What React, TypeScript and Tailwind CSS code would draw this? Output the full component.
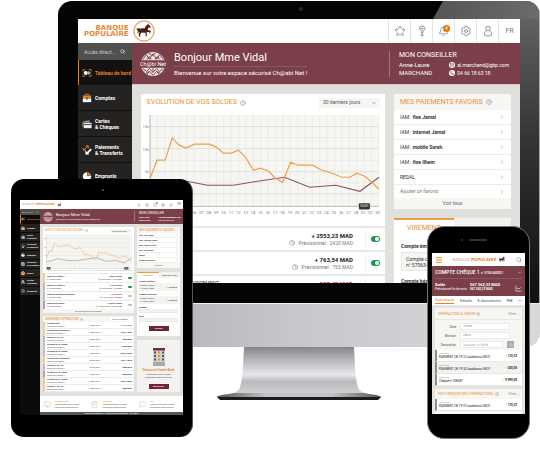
import React from "react";
import {
  Star, Bell, Settings, User, Search, ChevronDown, ChevronRight, CircleHelp, Clock,
  Mail, Phone, Menu, ChartLine, Briefcase, CreditCard, PieChart, LayoutDashboard,
  ArrowLeftRight, Home, Users, FileText, ShoppingBag, Monitor, MessageSquare,
} from "lucide-react";

const orange: [number, number][] = [
  [150, 178], [157, 160], [165, 160], [172, 138], [179, 145], [186, 148], [194, 144], [209, 144],
  [216, 147], [223, 153], [231, 153], [238, 150], [245, 157], [253, 170], [260, 168], [268, 171],
  [275, 178], [282, 182], [290, 162], [297, 165], [312, 165], [319, 169], [334, 174], [341, 177],
  [349, 177], [356, 173], [364, 176], [371, 182], [378, 189],
];
const plum: [number, number][] = [
  [150, 188], [162, 186], [180, 180], [192, 182], [207, 185], [233, 185], [257, 181], [284, 177],
  [309, 187], [335, 185], [359, 191], [378, 177],
];
const days = ["31", "01", "02", "03", "04", "05", "06", "07", "08", "09", "10", "11", "12", "13", "14", "15", "16", "17", "18", "19", "20", "21", "22", "23", "24", "25", "26", "27", "28", "01", "02", "03"];
const toPoints = (p: [number, number][]) => p.map((q) => q.join(",")).join(" ");

function BalanceChart() {
  return (
    <svg viewBox="141 114 243 102" className="block w-full" role="img" aria-label="Evolution de vos soldes">
      <rect x="150" y="115" width="228" height="91" fill="#f6f6f3" />
      {days.map((d, i) => (
        <line key={"v" + i} x1={150 + i * 7.35} x2={150 + i * 7.35} y1="115" y2="206" stroke="#e6e6e2" strokeWidth="0.7" />
      ))}
      {[126, 137, 148, 160, 171, 182, 193].map((y, i) => (
        <line key={y} x1="150" x2="378" y1={y + 0.5} y2={y + 0.5} stroke={i % 2 ? "#e9e9e5" : "#dededa"} strokeWidth="0.9" />
      ))}
      <path d="M150 115v91h228" fill="none" stroke="#a9a9a9" strokeWidth="0.8" />
      <polyline points={toPoints(plum)} fill="none" stroke="#895562" strokeWidth="1.1" />
      <polyline points={toPoints(orange)} fill="none" stroke="#f0a048" strokeWidth="1.2" />
      {["15k", "10k", "5k"].map((t, i) => (
        <text key={t} x="149" y={128 + i * 22.5} fontSize="4" textAnchor="end" fill="#8a8a8a" fontFamily="Roboto">{t}</text>
      ))}
      {days.map((d, i) => (
        <text key={i} x={150 + i * 7.32} y="214" fontSize="4" textAnchor="middle" fill="#777" fontFamily="Roboto">{d}</text>
      ))}
      <rect x="151" y="203" width="10" height="6" rx="1" fill="#333" />
      <text x="156" y="207" fontSize="3" textAnchor="middle" fill="#ddd" fontFamily="Roboto">FEV</text>
      <rect x="358" y="203" width="11" height="6" rx="1" fill="#333" />
      <text x="363.5" y="207" fontSize="3" textAnchor="middle" fill="#ddd" fontFamily="Roboto">MARS</text>
    </svg>
  );
}

function Horse({ ring, className }: { ring?: boolean; className: string }) {
  return (
    <svg viewBox={ring ? "0 0 24 24" : "2 3 20 17"} className={"shrink-0 " + className} aria-hidden="true">
      {ring && <circle cx="12" cy="12" r="11" fill="#fff" stroke="#e9a365" strokeWidth="1.3" />}
      <path
        fill="#4a1f14"
        d="M3.500 10.500c1-1.600 3-1.900 4.600-.9 1.500-.6 3.100-.5 4.500-.4.8-1.800 1.500-3.300 3.100-4.100l.4-1.200.7 1.100c1.300.5 1.900 1.500 2.500 2.700l-.6.9-2-.3c-.2 1.200-.4 2.200-.7 3 1.500 0 2.800.3 3.600 1.200l-1.200 2.200-.8-.2.5-1.400c-1-.2-2-.1-3 .2-.3 1.600.1 2.900.1 4.500l-1.300.2-.3-4.100c-1.600 0-2.900-.2-4.100-.3-.6 1-1.500 1.600-1.900 2.300l.6 2.300-1.200.1-.9-2.600c.4-1.100 1.100-2 1.300-3.200-1 .5-1.300 1.800-2.700 2.300.5-1.200.8-2.400.4-3.600-.5-.5-1-.8-1.600-.7z"
      />
    </svg>
  );
}

function Globe({ className }: { className: string }) {
  return (
    <svg viewBox="0 0 28 28" className={className} aria-hidden="true">
      <defs>
        <clipPath id="globeClip"><circle cx="14" cy="14" r="13" /></clipPath>
      </defs>
      <g clipPath="url(#globeClip)">
        <path d="M0 0h28v10H0zM0 18h28v10H0z" fill="#e9dde0" />
        <path
          d="M3 9l4-5 3 5 4-6 4 6 3-5 4 5M7 9l3-3 2 3M16 9l3-3 2 3M9 2l4 3 4-3M3 19l4 3 3-3 4 4 4-4 3 3 4-3M6 24l4-2 4 4 4-4 4 2M10 22l-3 4M18 22l3 4M14 18v5"
          fill="none" stroke="#7b3f49" strokeWidth="1"
        />
      </g>
      <text x="14" y="16" fontSize="6" textAnchor="middle" fill="#fff" fontFamily="Roboto">Ch@bi Net</text>
    </svg>
  );
}

const menu = [
  { label: "Tableau de bord", Icon: LayoutDashboard },
  { label: "Comptes", Icon: Briefcase },
  { label: "Cartes\n& Chèques", Icon: CreditCard },
  { label: "Paiements\n& Transferts", Icon: ArrowLeftRight },
  { label: "Emprunts", Icon: PieChart },
  { label: "Assurance\n& Prévoyance", Icon: Briefcase },
  { label: "Bourse", Icon: Home },
  { label: "Gestion\n& Contacts", Icon: Users },
  { label: "Documents", Icon: FileText },
];

function MenuGlyph({ index, className }: { index: number; className: string }) {
  const kinds = [
    <g key="a"><path d="M1 2h3M1 2v2M11 2H8M11 2v2M1 10V8M11 10V8M1 10h3M11 10H8" stroke="#e8821e" fill="none" /><circle cx="4.500" cy="6" r="2.500" fill="#fff" /><path d="M8 4v4M9.500 4.500v3" stroke="#fff" fill="none" /></g>,
    <g key="b"><path d="M4 3V1.500h4V3" stroke="#e8821e" fill="none" /><path d="M1 3h10v3H1z" fill="#e8821e" /><path d="M1 6.500h10V11H1z" fill="#fff" /><path d="M5 5.500h2V8H5z" fill="#555" /></g>,
    <g key="c"><path d="M1 3l8-1.500V4H1z" fill="#999" /><path d="M2 4.500h9.500V11H2z" fill="#eee" /><path d="M2 6h9.500v1.300H2z" fill="#555" /><path d="M1 4v5" stroke="#aaa" /></g>,
    <g key="d"><path d="M2 6L7 1.500M4.500 1h3v3M1 3.500L2 6l2.500.5" stroke="#e8821e" strokeWidth="1.200" fill="none" /><path d="M11 5L6 10" stroke="#fff" strokeWidth="2.200" /><path d="M4 6.500V11.500h5z" fill="#fff" /></g>,
    <g key="e"><circle cx="6" cy="6.500" r="5" fill="#fff" /><path d="M6.500 6V1a5 5 0 0 1 4 4z" fill="#e8821e" stroke="#242322" strokeWidth="0.600" /></g>,
  ];
  const { Icon } = menu[index];
  return index < 5
    ? <svg viewBox="0 0 12 12" className={"shrink-0 " + className} aria-hidden="true">{kinds[index]}</svg>
    : <Icon className={"shrink-0 " + className} color={index === 8 ? "#999" : "#fff"} fill={index === 6 ? "#e8821e" : "none"} strokeWidth={3} />;
}

function ToolIcons() {
  const cell = "flex h-full w-[22px] items-center justify-center border-l border-[#e4e4e4] text-[#777]";
  return (
    <nav className="flex h-full" aria-label="Outils">
      <button className={cell} aria-label="Favoris"><Star size={12} strokeWidth={1.5} /></button>
      <button className={cell} aria-label="Aide">
        <svg viewBox="0 0 12 12" className="h-3 w-3" fill="none" stroke="#777" strokeWidth="0.800">
          <path d="M3.500 4.200C3.300 2 4.500 1 6 1s2.800 1 2.800 2.500C8.800 5.200 7 5.300 7 7.800H5.200C5.200 5 7 4.800 7 3.500c0-1-1.800-1-1.800.7z" /><circle cx="6.100" cy="10" r="1" />
        </svg>
      </button>
      <button className={cell + " relative"} aria-label="Alertes">
        <Bell size={11} strokeWidth={1.5} />
        <span className="absolute top-1.5 right-1 flex h-[7px] w-[7px] items-center justify-center rounded-full bg-[#ee7203] text-[5px] leading-none text-white">4</span>
      </button>
      <button className={cell} aria-label="Réglages"><Settings size={12} strokeWidth={1.500} /></button>
      <button className={cell} aria-label="Profil">
        <svg viewBox="0 0 12 12" className="h-3 w-3" fill="none" stroke="#777" strokeWidth="0.800">
          <circle cx="6" cy="3.500" r="2.300" /><path d="M4.500 5.500C2.600 6.500 2.200 8.500 2.300 10c1.500 1.300 5.900 1.300 7.400 0 .1-1.500-.3-3.500-2.200-4.500" />
        </svg>
      </button>
      <button className={cell + " text-[7px] text-[#8b5560]"}>FR</button>
    </nav>
  );
}

function Toggle({ label, small, off }: { label: string; small?: boolean; off?: boolean }) {
  return small ? (
    <input type="checkbox" aria-label={label} defaultChecked={!off}
      className="h-0.5 w-1 appearance-none rounded-[1px] bg-[#bbb] checked:bg-[#1d9650]" />
  ) : (
    <label className="relative flex h-[6px] w-[9px] items-center">
      <input type="checkbox" aria-label={label} defaultChecked={!off} className="peer h-full w-full appearance-none rounded-full bg-[#bbb] checked:bg-[#1d9650]" />
      <span className="absolute right-px h-1 w-1 rounded-full bg-white" />
    </label>
  );
}

const favorites = [["IAM : ", "fixe Jamal"], ["IAM : ", "internet Jamal"], ["IAM : ", "mobile Sarah"], ["IAM : ", "fixe Ilhem"], ["REDAL", ""]];

function DesktopScreen() {
  return (
    <div className="flex h-[264px] flex-col overflow-hidden bg-white font-[Roboto] text-[5px] leading-none">
      <header className="flex h-6 shrink-0 items-center justify-between">
        <a href="#accueil" className="flex items-center gap-1 pl-1.5">
          <span className="text-right font-['DejaVu_Sans',sans-serif] text-[7px] leading-[6px] font-bold text-[#e58a3c]">BANQUE<br />POPULAIRE</span>
          <Horse ring className="h-[22px] w-[22px]" />
        </a>
        <ToolIcons />
      </header>
      <div className="flex min-h-0 flex-1">
        <aside className="w-[54px] shrink-0 bg-[#242322] text-white">
          <div className="flex h-[17px] items-center justify-between bg-[#50504f] pr-[7px] pl-1.5">
            <input aria-label="Accès direct" placeholder="Accès direct..." className="w-[34px] bg-transparent text-[5px] placeholder:text-[#ccc]" />
            <Search size={5} strokeWidth={3} color="#ddd" />
          </div>
          {menu.slice(0, 5).map((m, i) => (
            <a key={m.label} href={"#menu" + i}
              className={"flex items-center gap-[3px] leading-[6px] font-bold whitespace-pre " + (i === 0 ? "h-[25px] border-l border-[#ee7f16] bg-[#121212] pl-[3px] text-[#ee7f16]" : "h-[26px] border-b border-[#111] pl-1")}>
              <MenuGlyph index={i} className="h-[10px] w-[10px]" />
              {m.label}
            </a>
          ))}
        </aside>
        <main className="flex min-w-0 flex-1 flex-col bg-[#e2e0dc]">
          <section className="flex h-[42px] shrink-0 items-center justify-between border-b border-[#d9c8ca] bg-[#7b3f49] pl-2 text-white">
            <div className="flex items-center gap-2">
              <Globe className="h-[26px] w-[26px]" />
              <div>
                <h1 className="border-b border-[#8d5660] pb-px text-[11px] leading-[14px]">Bonjour Mme Vidal</h1>
                <p className="pt-0.5 text-[6px] leading-[8px]">Bienvenue sur votre espace sécurisé Ch@abi Net !</p>
              </div>
            </div>
            <div className="w-[131px] border-l border-[#a2747c] pl-[9px]">
              <h2 className="text-[7px] leading-[9px]">MON CONSEILLER</h2>
              <div className="flex gap-[17px] leading-[8px]">
                <p className="pt-px text-[6px]">Anne-Laure<br />MARCHAND</p>
                <div className="pt-px">
                  <p className="flex items-center gap-0.5"><span className="rounded-full bg-white p-px"><Mail size={4} color="#7b3f49" strokeWidth={3} /></span>al.marchand@gbp.com</p>
                  <p className="flex items-center gap-0.5"><span className="rounded-full bg-white p-px"><Phone size={4} color="#7b3f49" strokeWidth={3} /></span>04 66 18 63 18</p>
                </div>
              </div>
            </div>
          </section>
          <div className="flex gap-[9px] px-[9px] pt-[9px]">
            <section className="min-w-0 flex-1 bg-white">
              <div className="flex h-[17px] items-center justify-between pr-[5px] pl-1.5">
                <h2 className="flex items-center gap-[3px] text-[7px] text-[#e8902f]">EVOLUTION DE VOS SOLDES <CircleHelp size={6} color="#888" /></h2>
                <label className="relative flex items-center">
                  <select aria-label="Période" className="h-[10px] w-[61px] appearance-none bg-[#f6f6f3] pl-1 text-[5px] leading-none text-[#555]"><option>30 derniers jours</option></select>
                  <ChevronDown size={6} color="#777" className="absolute right-[3px]" />
                </label>
              </div>
              <div className="pt-[3px]"><BalanceChart /></div>
              <div className="h-[10px]" />
              {[["+ 2553,23 MAD", "2420 MAD"], ["+ 763,54 MAD", "763 MAD"], ["- 105,45 MAD", "98 MAD"]].map(([a, p], i) => (
                <div key={a} className={"flex h-6 items-center border-t-2 border-[#e8e8e6] pr-[5px] " + (i === 2 ? "justify-between" : "justify-end")}>
                  {i === 2 && <span className="self-start pt-[3px] pl-[37px] leading-[8px] text-[#333]">DÉVELOPPEMENT</span>}
                  <div className="flex items-center">
                    <div className="flex flex-col items-end pr-3">
                      <strong className={"text-[6px] leading-[8px] " + (i === 2 ? "text-[#d8202a]" : "text-[#222]")}>{a}</strong>
                      <span className="flex items-center gap-1 leading-[6px] text-[#777]"><Clock size={6} />Prévisionnel : {p}</span>
                    </div>
                    <div className="flex h-4 items-center border-l border-[#eee] pl-[5px]"><Toggle label={"Afficher le compte " + (i + 1)} /></div>
                  </div>
                </div>
              ))}
            </section>
            <div className="w-[117px] shrink-0">
              <section className="bg-white text-[#333]">
                <h2 className="flex h-4 items-center gap-[3px] bg-[#f7f6f2] pl-1.5 text-[7px] text-[#e8902f]">MES PAIEMENTS FAVORIS <CircleHelp size={6} color="#888" /></h2>
                {favorites.map(([a, b]) => (
                  <a key={b} href="#favori" className="flex h-[15px] items-center justify-between border-b border-[#ecece9] px-1.5">
                    <span>{a}<b>{b}</b></span><ChevronRight size={6} color="#888" />
                  </a>
                ))}
                <a href="#ajouter" className="flex h-[13px] items-center justify-between px-1.5 text-[#777] italic">Ajouter un favoris<ChevronRight size={6} color="#888" /></a>
                <a href="#tous" className="flex h-[11px] items-center justify-center bg-[#f7f6f2] text-[#666]">Voir tous</a>
              </section>
              <section className="mt-[9px] h-[80px] bg-white text-[#333]">
                <div className="flex h-[19px] text-[7px]">
                  <button className="w-[60px] border-t-2 border-[#ee9a45] text-[#e8902f]">VIREMENT</button>
                  <button className="flex-1 bg-[#f3f2ef] text-[6px] text-[#888]">TRANSFERT CASH</button>
                </div>
                <div className="px-[7px] pt-[5px]">
                  <b className="block leading-[8px]">Compte émetteur</b>
                  <p className="my-0.5 h-[19px] border border-[#e6e6e2] bg-[#f6f6f3] px-1 py-[3px] leading-[6px]">Compte chèque<br />n° 57063440001</p>
                  <b className="block pt-1 leading-[8px]">Compte bénéficiaire</b>
                </div>
              </section>
            </div>
          </div>
        </main>
      </div>
    </div>
  );
}

function InlineLogo({ className, mark }: { className: string; mark: string }) {
  return (
    <a href="#accueil" className={"flex items-center gap-0.5 font-['DejaVu_Sans',sans-serif] text-[#e58a3c] " + className}>
      <span><span className="text-[#c9a184]">BANQUE </span><b>POPULAIRE</b></span>
      <Horse className={mark} />
    </a>
  );
}

const accounts = [
  { name: "COMPTE CHÈQUE 1", amount: "+ 2553,23 MAD", note: "Prévisionnel : 2420 MAD", bar: "border-l-[#f5c99a]", off: false },
  { name: "COMPTE CHÈQUE 2", amount: "+ 763,54 MAD", note: "Prévisionnel : 763 MAD", bar: "border-l-[#cdb3bf]", off: false },
  { name: "COMPTE DE DÉVELOPPEMENT", amount: "- 105,45 MAD", note: "Prévisionnel : 98 MAD", bar: "border-l-[#b7bfd6]", off: true },
  { name: "COMPTE ÉPARGNE", amount: "+ 10 095,13 MAD", note: "Prévisionnel : 10 095 MAD", bar: "border-l-[#a9a9a9]", off: true },
];
const operations = [
  ["Virement reçu", "+ 772,22 MAD", "border-l-[#f5c99a]"],
  ["Paiement CB Casablanca", "- 485,41 MAD", "border-l-[#f5c99a]"],
  ["Chèque n° 521457", "- 2000 MAD", "border-l-[#cdb3bf]"],
  ["Virement M. M. Rayani", "- 90,00 MAD", "border-l-[#b7bfd6]"],
  ["Virement M. M. Rayani", "- 300,12 MAD", "border-l-[#b7bfd6]"],
  ["Paiement CB Casablanca", "- 485,41 MAD", "border-l-[#f5c99a]"],
  ["Chèque n° 521457", "- 2000 MAD", "border-l-[#cdb3bf]"],
  ["Virement M. M. Rayani", "- 90,00 MAD", "border-l-[#a9a9a9]"],
  ["Virement M. M. Rayani", "- 300,12 MAD", "border-l-[#f5c99a]"],
  ["Chèque n° 521457", "- 2000 MAD", "border-l-[#f5c99a]"],
];

function TabletScreen() {
  const tool = "flex w-2 justify-center text-[#888]";
  return (
    <div className="flex h-[215px] flex-col overflow-hidden bg-white font-[Roboto] text-[2px] leading-[3px] text-[#444]">
      <header className="flex h-[9px] shrink-0 items-center justify-between pl-0.5">
        <InlineLogo className="text-[3px]" mark="h-1 w-[5px]" />
        <nav className="flex items-center" aria-label="Outils">
          <button className={tool} aria-label="Favoris"><Star size={4} /></button>
          <button className={tool} aria-label="Aide"><CircleHelp size={4} /></button>
          <button className={tool + " relative"} aria-label="Alertes"><Bell size={4} /><span className="absolute -top-px right-px h-0.5 w-0.5 rounded-full bg-[#ee7203]" /></button>
          <button className={tool} aria-label="Réglages"><Settings size={4} /></button>
          <button className={tool} aria-label="Profil"><User size={4} /></button>
          <button className="w-2 text-[3px] text-[#8b5560]">FR</button>
        </nav>
      </header>
      <div className="flex min-h-0 flex-1">
        <aside className="w-5 shrink-0 bg-[#0b0b0b] text-white">
          <div className="flex h-[6px] items-center justify-between bg-[#50504f] px-0.5">
            <input aria-label="Accès direct" placeholder="Accès direct..." className="w-[14px] bg-transparent text-[2px] placeholder:text-[#ccc]" />
            <Search size={2} color="#ccc" />
          </div>
          {menu.map((m, i) => (
            <a key={m.label} href={"#menu" + i} className={"flex h-[9px] items-center gap-0.5 border-b border-b-[#0b0b0b] text-[2px] leading-[3px] font-bold whitespace-pre " + (i === 0 ? "border-l border-l-[#ee7f16] text-[#ee7f16]" : "bg-[#232221] pl-px")}>
              <MenuGlyph index={i} className="h-1 w-1" />{m.label}
            </a>
          ))}
        </aside>
        <main className="flex min-w-0 flex-1 flex-col bg-[#e2e0dc]">
          <section className="flex h-[15px] shrink-0 items-center justify-between bg-[#7b3f49] pl-[3px] text-white">
            <div className="flex items-center gap-[3px]">
              <Globe className="h-[10px] w-[10px]" />
              <div><h1 className="text-[4px] leading-[5px]">Bonjour Mme Vidal</h1><p className="pt-px">Bienvenue sur votre espace sécurisé Ch@abi Net !</p></div>
            </div>
            <div className="w-[49px] border-l border-[#a2747c] pl-1">
              <h2 className="pb-px text-[3px] leading-[4px]">MON CONSEILLER</h2>
              <div className="flex gap-2 font-bold"><p>Anne-Laure<br />MARCHAND</p><p>● al.marchand@gbp.com<br />● 04 66 18 63 18</p></div>
            </div>
          </section>
          <div className="flex flex-1 gap-[3px] p-[3px] pb-0">
            <div className="min-w-0 flex-1">
              <section className="bg-white">
                <div className="flex h-[7px] items-center justify-between px-0.5">
                  <h2 className="flex items-center gap-px text-[3px] text-[#e8902f]">EVOLUTION DE VOS SOLDES <CircleHelp size={3} color="#888" /></h2>
                  <select aria-label="Période" className="h-1 w-[22px] appearance-none bg-[#f3f3f0] pl-0.5 text-[2px] leading-none"><option>30 derniers jours</option></select>
                </div>
                <div className="pb-px"><BalanceChart /></div>
                {accounts.map((a) => (
                  <div key={a.name} className={"flex h-[9px] items-center border-t border-l-2 border-t-[#e8e8e6] pl-0.5 " + a.bar}>
                    <div className="flex-1"><b className="text-[#222]">{a.name}</b><br />n° 57063440001</div>
                    <div className="pr-1.5 text-right"><b className={a.amount.startsWith("-") ? "text-[#e02020]" : "text-[#222]"}>{a.amount}</b><br />◷ {a.note}</div>
                    <div className="mr-0.5 flex h-full items-center"><Toggle small off={a.off} label={a.name} /></div>
                  </div>
                ))}
                <p className="h-1 bg-[#f7f6f2] text-center leading-[4px]">AFFICHER TOUS LES SOLDES</p>
              </section>
              <section className="mt-[3px] bg-white">
                <div className="flex h-[6px] items-center justify-between bg-[#f7f6f2] px-0.5">
                  <h2 className="flex items-center gap-px text-[3px] text-[#e8902f]">DERNIÈRES OPÉRATIONS <CircleHelp size={3} color="#888" /></h2>
                  <select aria-label="Compte" className="h-1 w-[22px] appearance-none bg-white pl-0.5 text-[2px] leading-none"><option>Tous les comptes</option></select>
                </div>
                <table className="w-full border-separate border-spacing-0">
                  <tbody>
                    {operations.map(([n, a, bar], i) => (
                      <tr key={i} className="h-[7px]">
                        <td className={"border-b border-l-2 border-b-[#ececec] p-0 pl-0.5 " + bar}><b className="text-[#222]">{n}</b><br />COMPTE CHÈQUE 1</td>
                        <td className="border-b border-[#ececec] p-0">30/05/2015</td>
                        <td className={"border-b border-[#ececec] p-0 pr-0.5 text-right font-bold " + (i === 0 ? "text-[#1d9650]" : "text-[#222]")}>{a}</td>
                      </tr>
                    ))}
                  </tbody>
                </table>
              </section>
            </div>
            <div className="w-[43px] shrink-0">
              <section className="bg-white">
                <h2 className="flex h-[6px] items-center gap-px bg-[#f7f6f2] pl-0.5 text-[3px] text-[#e8902f]">MES PAIEMENTS FAVORIS</h2>
                {[...favorites, ["Ajouter un favoris", ""]].map(([a, b]) => (
                  <a key={a + b} href="#favori" className="flex h-[5px] items-center justify-between border-b border-[#f0f0ee] px-0.5 text-[#222]"><b>{a}{b}</b><ChevronRight size={2} /></a>
                ))}
                <a href="#tous" className="block h-[5px] bg-[#f7f6f2] text-center leading-[5px]">Voir tous</a>
              </section>
              <section className="mt-1 h-[64px] bg-white">
                <div className="flex h-[6px]">
                  <button className="w-[22px] border-t border-[#ee9a45] font-bold text-[#e8902f]">VIREMENT</button>
                  <button className="flex-1 bg-[#f3f2ef]">TRANSFERT CASH</button>
                </div>
                <div className="flex flex-col px-0.5 pt-0.5">
                  {["Compte émetteur", "Compte bénéficiaire"].map((l) => (
                    <div key={l} className="h-[13px]">
                      <b className="block text-[#222]">{l}</b>
                      <p className="flex h-[8px] items-center justify-between bg-[#f3f3f0] px-px"><span>Compte chèque 1<br />n° 57063440001</span><b>+ 1489 MAD</b></p>
                    </div>
                  ))}
                  {["Montant", "Motif"].map((l) => (
                    <label key={l} className="mb-px flex h-2 flex-col font-bold text-[#222]">{l}<input aria-label={l} className="h-1 w-full border border-[#eaeae6] bg-[#f3f3f0]" /></label>
                  ))}
                  <button className="mx-auto mt-0.5 h-[5px] w-5 bg-[#6f2434] font-bold text-white">VALIDER</button>
                </div>
              </section>
              <section className="mt-1 flex h-[52px] flex-col items-center bg-[#f3f2f0] pt-2 text-center">
                <svg viewBox="0 0 12 18" className="h-[18px] w-3" aria-hidden="true">
                  <path d="M0 0h12v18H0z" fill="#d2d0ce" /><path d="M0 0h12v2.500H0z" fill="#6d3038" /><path d="M0 14h12v4H0z" fill="#aaa" />
                  {[3.5, 7, 10.5].map((y) => [1, 5, 9].map((x) => <rect key={x + "-" + y} x={x} y={y} width="2" height="2" fill={x === 5 ? "#e8902f" : "#555"} />))}
                </svg>
                <b className="pt-[3px] text-[3px] text-[#e8902f]">Découvrez Pocket Bank</b>
                <p className="h-3 px-1 pt-px">Lorem ipsum dolor sit amet consectetur adipiscing elit sed</p>
                <button className="h-[5px] w-5 bg-[#6f2434] font-bold text-white">DÉCOUVRIR</button>
              </section>
            </div>
          </div>
          <footer className="shrink-0">
            <div className="flex h-4 items-center justify-around bg-white">
              {[["NUMÉRO VERT", Monitor], ["SÉCURITÉ", ShoppingBag], ["FAQ", MessageSquare]].map(([t, I]) => {
                const Icon = I as typeof Monitor;
                return (
                  <div key={t as string} className="flex w-10 items-center gap-1">
                    <Icon size={7} strokeWidth={1} color="#999" className="shrink-0" />
                    <p><b className="text-[#e8902f]">{t as string}</b><br />Lorem ipsum dolor sit amet consectetur adipiscing elit</p>
                  </div>
                );
              })}
            </div>
            <p className="h-[3px] bg-[#555] text-center text-white">MENTIONS LÉGALES · CONDITIONS GÉNÉRALES · CONTACT</p>
          </footer>
        </main>
      </div>
    </div>
  );
}

function PhoneOperation({ name, amount, date, tint }: { name: string; amount: string; date: string; tint?: boolean }) {
  return (
    <div className={"flex h-[12px] items-center justify-between border-b border-l-2 border-b-[#e8e8e6] border-l-[#8c8c8c] px-0.5 text-[#222] " + (tint ? "bg-[#f3f2ef]" : "bg-white")}>
      <p className="whitespace-nowrap"><span className="block text-[2px] leading-[3px] text-[#888]">{date}</span>{name}</p>
      <b className="pr-[3px] whitespace-nowrap">{amount}</b>
    </div>
  );
}

function PhoneScreen() {
  return (
    <div className="h-[161px] overflow-hidden bg-[#e6e4e0] font-[Roboto] text-[3px] leading-1 text-[#555]">
      <header className="flex h-[13px] items-center justify-between bg-white px-[3px]">
        <button aria-label="Menu"><Menu size={8} strokeWidth={3} color="#e8902f" /></button>
        <InlineLogo className="text-[4px]" mark="h-[7px] w-2" />
        <button aria-label="Rechercher"><Search size={6} color="#777" /></button>
      </header>
      <section className="h-[30px] bg-[#7b3f49] px-[3px] text-white">
        <h1 className="flex h-[13px] items-center justify-between border-b border-[#8d5660] text-[5px] font-medium"><span>COMPTE CHÈQUE 1 <small className="text-[3px]">n° 57063440001</small></span><ChevronDown size={5} /></h1>
        <div className="flex items-end justify-between pt-[3px]">
          <dl className="grid grid-cols-[35px_auto] leading-[5px]">
            <dt className="text-[4px] font-bold">Solde</dt><dd className="text-[4px] font-bold">567 562,33 MAD</dd>
            <dt className="whitespace-nowrap">Prévisionnel fin de mois</dt><dd className="font-bold">567 562,33 MAD</dd>
          </dl>
          <ChartLine size={7} strokeWidth={2} />
        </div>
      </section>
      <nav className="flex h-[9px] items-center justify-between bg-white px-[3px] text-[4px]">
        <a href="#operations" className="border-b border-[#ee7f16] leading-[6px] text-[#e8802f]">Opérations</a>
        <a href="#details">Détails</a><a href="#documents">E-documents</a><a href="#rib">RIB</a><span>•••</span>
      </nav>
      <div className="px-[3px] pt-[3px]">
        <section className="bg-[#f7f6f2]">
          <div className="flex h-[11px] items-center justify-between px-[3px]">
            <h2 className="flex items-center gap-px text-[4px] text-[#e8902f]">OPÉRATION À VENIR <CircleHelp size={4} color="#888" /></h2><span className="text-[#888]">Filtrer ⌵</span>
          </div>
          <div className="flex h-[31px] flex-col gap-0.5 border-t border-[#e8e8e4] px-[3px] pt-[3px]">
            {[["Date", "Toutes"], ["Montant", "Début"]].map(([l, v]) => (
              <label key={l} className="grid grid-cols-[18px_50px] items-center gap-1 text-right">{l}
                <select className="h-[7px] appearance-none border border-[#ececea] bg-white pl-0.5 text-[3px] leading-none text-[#999]"><option>{v}</option></select>
              </label>
            ))}
            <div className="flex items-center gap-1">
              <label htmlFor="desc" className="w-[18px] text-right">Description</label>
              <input id="desc" placeholder="Saisissez un libellé" className="h-[7px] w-[43px] border border-[#ececea] bg-white pl-0.5" />
              <button aria-label="Chercher" className="flex h-[7px] w-[7px] items-center justify-center bg-[#aaa]"><Search size={4} color="#fff" /></button>
            </div>
          </div>
          <PhoneOperation date="30.05.2015" name="PAIEMENT CB 1913 Casablanca SNCF" amount="- 110,33" />
          <PhoneOperation date="30.05.2015" name="PAIEMENT CB 1914 Casablanca SNCF" amount="- 250,00" tint />
          <PhoneOperation date="30.05.2015" name="Chèque n°258687" amount="- 9 999,00" />
        </section>
        <section className="mt-[3px]">
          <div className="flex h-[10px] items-center justify-between bg-[#f7f6f2] px-[3px]">
            <h2 className="flex items-center gap-px text-[4px] whitespace-nowrap text-[#e8902f]">HISTORIQUE DES OPÉRATIONS <CircleHelp size={4} color="#888" /></h2><span className="text-[#888]">Filtrer ⌵</span>
          </div>
          <PhoneOperation date="29.05.2015" name="PAIEMENT CB 1910 Casablanca SNCF" amount="- 110,33" />
          <div className="h-4 bg-[#f7f6f2]" />
        </section>
      </div>
    </div>
  );
}

export default function App() {
  return (
    <div className="relative mx-auto min-h-[462px] w-full max-w-[540px] overflow-hidden bg-white">
      <div className="ml-[58px] pt-px">
        <div className="relative rounded-t-[14px] border-r border-[#aaa] bg-[#040404] px-5 pt-[18px] pb-5">
          <div className="absolute inset-y-0 right-0 w-5 rounded-tr-[13px] bg-linear-to-b from-[#686868] via-[#303030] to-[#101010]" />
          <div className="absolute top-0 right-0 h-[18px] w-[106px] rounded-tr-[13px] bg-linear-to-r from-[#555] to-[#6b6b6b] [clip-path:polygon(10px_0,100%_0,100%_100%,0_100%)]" />
          <div className="absolute top-[6px] left-1/2 h-1 w-1 rounded-full bg-[#272545]" />
          <div className="relative -mr-px"><DesktopScreen /></div>
        </div>
        <div className="h-11 rounded-b-[14px] border-t border-[#eee] bg-linear-to-r from-[#a9a9ad] via-[#c8c8cc] to-[#d9d9dc]" />
        <svg viewBox="0 0 164 54" className="mx-auto block w-[164px]" aria-hidden="true">
          <defs>
            <linearGradient id="neck" x1="0" y1="0" x2="0" y2="1">
              <stop offset="0" stopColor="#85868a" /><stop offset="0.250" stopColor="#b0b1b5" /><stop offset="0.600" stopColor="#e9e9eb" />
              <stop offset="0.750" stopColor="#b9babd" /><stop offset="1" stopColor="#d0d0d3" />
            </linearGradient>
            <linearGradient id="foot" x1="0" y1="0" x2="1" y2="0">
              <stop offset="0" stopColor="#555" /><stop offset="0.300" stopColor="#c4c4c8" /><stop offset="0.700" stopColor="#c4c4c8" /><stop offset="1" stopColor="#555" />
            </linearGradient>
          </defs>
          <path d="M0 50c0-2 14-3 22-5h120c8 2 22 3 22 5l-3 2H3z" fill="url(#foot)" />
          <path d="M0 50h164l-3 3H3z" fill="#1b1b1b" />
          <path d="M27 0h110c1 16 1 34 5 43l5 3H17l5-3c4-9 4-27 5-43z" fill="url(#neck)" />
        </svg>
      </div>

      <div className="absolute top-[179px] left-[11px] w-[182px] rounded-[13px] border-r border-[#555] bg-black px-[9px] pt-[21px] pb-[22px]">
        <div className="absolute top-[10px] left-1/2 h-0.5 w-0.5 rounded-full bg-[#555a6a]" />
        <TabletScreen />
      </div>

      <div className="absolute top-[226px] right-[10px] w-[103px] rounded-[17px] border border-[#77777a] bg-black px-[4px] pt-[26px] pb-6">
        <div className="absolute top-[12px] left-[33px] h-0.5 w-0.5 rounded-full bg-[#333]" />
        <div className="absolute top-[12px] left-[41px] h-0.5 w-[18px] rounded-full bg-[#333]" />
        <PhoneScreen />
      </div>
    </div>
  );
}
